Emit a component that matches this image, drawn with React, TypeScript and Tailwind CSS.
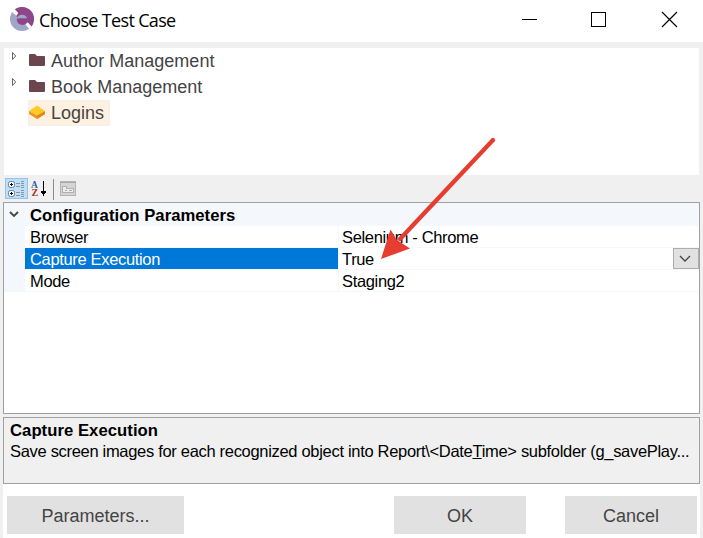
import React from "react";

const arial = "font-['Liberation_Sans',Arial,sans-serif]";

function Logo() {
  return (
    <svg width="26" height="26" viewBox="0 0 26 26" className="block">
      <circle cx="12" cy="13" r="12" fill="#a0a6c8" />
      <path d="M3.5 4.5A12 12 0 0 1 20.5 21.5L15.5 16.5L6.6 11Q6.6 9.2 8 8Z" fill="#8d4788" />
      <path d="M6.9 12.6A5.4 5.4 0 0 1 17.2 12.6Z" fill="#a0a6c8" />
      <path d="M6.9 12.6H18V15.6L16 17.4A5.4 5.4 0 0 1 6.9 12.6Z" fill="#8d4788" />
      <path d="M1.6 5.8L4.6 3L8.2 7L6.2 9.6Z" fill="#fff" />
      <path d="M15.6 18.4L17.6 16.2L21.6 20.6L19.4 23Z" fill="#fff" />
    </svg>
  );
}

function TitleBar() {
  return (
    <header className="flex h-[42px] shrink-0 bg-white pl-[10px]">
      <div className="w-[29px] pt-[6px]"><Logo /></div>
      <h1 className="w-[454px] pt-[5px] font-['Open_Sans','Noto_Sans',sans-serif] text-[18px] leading-[30px] tracking-[-0.66px] text-black">Choose Test Case</h1>
      <svg width="210" height="42" viewBox="493 0 210 42" shapeRendering="crispEdges" fill="none" stroke="#000">
        <path d="M522 19.5H537" />
        <rect x="591.5" y="12.5" width="14" height="14" />
        <path d="M662 12L677 27M677 12L662 27" shapeRendering="auto" strokeWidth="1.15" />
      </svg>
    </header>
  );
}

function Folder() {
  return (
    <svg width="16" height="12" viewBox="0 0 16 12" className="block">
      <path d="M0 1Q0 0 1 0H6L8 2H15Q16 2 16 3V11Q16 12 15 12H1Q0 12 0 11Z" fill="#6b474d" />
    </svg>
  );
}

function TreeRow({ label }: { label: string }) {
  return (
    <li className="flex h-[26px] pl-[7px]">
      <svg width="18" height="16" viewBox="0 0 18 16" className="block">
        <path d="M1.5 4.5V11.5L4.7 8Z" fill="#fff" stroke="#666" />
      </svg>
      <div className="w-[22px] pt-[6px]"><Folder /></div>
      <span className="text-[18px] leading-[26px] tracking-[0.02px]">{label}</span>
    </li>
  );
}

function Tree() {
  return (
    <ul className={`mx-[4px] mt-[6px] h-[127px] shrink-0 bg-white text-[#444] ${arial}`}>
      <TreeRow label="Author Management" />
      <TreeRow label="Book Management" />
      <li className="ml-[24px] flex h-[26px] w-[82px] border border-[#f1eff1] bg-[#fff1e0]">
        <svg width="22" height="24" viewBox="0 0 22 24" className="block shrink-0">
          <path d="M0 10V13L8 18L16 13V10L8 14Z" fill="#ef9722" />
          <path d="M8 14L16 10V13L8 18Z" fill="#df861e" />
          <path d="M0 10L8 4.5L16 10L8 14.5Z" fill="#ffc928" />
        </svg>
        <span className="text-[18px] leading-[24px]">Logins</span>
      </li>
    </ul>
  );
}

function Toolbar() {
  return (
    <div className="flex h-[27px] shrink-0 pl-[5px]">
      <svg width="75" height="27" viewBox="5 175 75 27" shapeRendering="crispEdges" className="block">
        <rect x="5.5" y="178.5" width="22" height="20" fill="#c2def5" stroke="#8fc5f1" />
        {[181, 190].map((y) => (
          <g key={y}>
            <rect x="8.5" y={y + 0.5} width="6" height="6" rx="2" fill="#fff" stroke="#5b83ad" shapeRendering="auto" />
            <path d={`M10 ${y + 3.5}H13M11.5 ${y + 2}V${y + 5}`} stroke="#000" />
            <path d={`M16 ${y + 2.5}H20M16 ${y + 5.5}H20`} stroke="#8297aa" />
            <path d={`M21 ${y + 0.5}H24M21 ${y + 2.5}H24M21 ${y + 4.5}H24M21 ${y + 6.5}H24`} stroke="#8297aa" />
          </g>
        ))}
        <text x="31" y="188" fontSize="9.5" fontWeight="bold" fill="#2e5ca8" fontFamily="Liberation Serif, serif">A</text>
        <text x="31.5" y="196" fontSize="10" fontWeight="bold" fill="#a3332b" fontFamily="Liberation Serif, serif">Z</text>
        <path d="M43.5 181V194" stroke="#000" />
        <path d="M41 191H46V192L43.5 196L41 192Z" fill="#000" />
        <path d="M53.5 179V200" stroke="#8c8c8c" />
        <rect x="60.5" y="181.5" width="15" height="14" fill="#d5d5d5" stroke="#b4b4b4" />
        <path d="M60 182.5H76" stroke="#aaa" />
        <path d="M62.5 192.5V186.5H66L67 188.5H73.5V192.5Z" fill="#eee" stroke="#b0b0b0" />
        <path d="M65 190.5H67M69 190.5H72" stroke="#aaa" />
      </svg>
    </div>
  );
}

type PropertyProps = { name: string; value: string; selected?: boolean };

function Property({ name, value, selected }: PropertyProps) {
  return (
    <div className="flex h-[22px] border-b border-[#f4f7fc] bg-white leading-[23px]">
      <div className={selected ? "w-[313px] bg-[#0078d7] pl-[5px] text-white" : "w-[313px] pl-[5px]"}>{name}</div>
      <div className="flex-1 border-l border-[#f4f7fc] pl-[3px]">{value}</div>
      {selected && (
        <button className="flex h-[21px] w-[26px] items-center justify-center border border-[#adadad] bg-[#e1e1e1] pr-[2px]">
          <svg width="12" height="8" viewBox="0 0 12 8" fill="none" stroke="#444" strokeWidth="1.3">
            <path d="M1 1L6 6L11 1" />
          </svg>
        </button>
      )}
    </div>
  );
}

function PropertyGrid() {
  return (
    <section className={`ml-[3px] h-[212px] w-[697px] shrink-0 border border-[#a0a0a0] bg-white text-[16.5px] text-black ${arial}`}>
      <div className="flex h-[23px] bg-[#f4f7fc]">
        <div className="w-[26px] pt-[8px] pl-[5px]">
          <svg width="10" height="7" viewBox="0 0 10 7" fill="none" stroke="#444" strokeWidth="1.8"><path d="M1 1L5 5L9 1" /></svg>
        </div>
        <h2 className="text-[16.67px] font-bold leading-[25px] tracking-[0.03px]">Configuration Parameters</h2>
      </div>
      <div className="bg-[#f4f7fc] pl-[21px] tracking-[-0.34px]">
        <Property name="Browser" value="Selenium - Chrome" />
        <Property name="Capture Execution" value="True" selected />
        <Property name="Mode" value="Staging2" />
      </div>
    </section>
  );
}

function Description() {
  return (
    <section className={`mt-[3px] ml-[3px] h-[67px] w-[697px] shrink-0 border border-[#a0a0a0] bg-[#f0f0f0] pt-[2px] pl-[6px] text-[16.5px] leading-[21px] text-black ${arial}`}>
      <h2 className="text-[16.67px] font-bold tracking-[0.05px]">Capture Execution</h2>
      <p className="whitespace-nowrap tracking-[-0.31px]">Save screen images for each recognized object into Report\&lt;Date<u>T</u>ime&gt; subfolder (g_savePlay...</p>
    </section>
  );
}

function Footer() {
  const button = "h-[38px] bg-[#e1e1e1] text-[18px] leading-[40px] text-[#444]";
  return (
    <footer className={`ml-[3px] flex w-[697px] flex-1 bg-white pt-[12px] pl-[4px] ${arial}`}>
      <button className={`${button} w-[177px]`}>Parameters...</button>
      <button className={`${button} ml-[210px] w-[132px]`}>OK</button>
      <button className={`${button} ml-[39px] w-[132px]`}>Cancel</button>
    </footer>
  );
}

export default function App() {
  return (
    <main className="relative flex h-[538px] w-[703px] flex-col overflow-hidden bg-[#f0f0f0]">
      <TitleBar />
      <Tree />
      <Toolbar />
      <PropertyGrid />
      <Description />
      <Footer />
      <svg className="pointer-events-none absolute inset-0" width="703" height="538" viewBox="0 0 703 538">
        <path d="M493 140L400 239" stroke="#e63d30" strokeWidth="4.3" strokeLinecap="round" />
        <path d="M381 259L390.5 229.5L397 240L400 242L410 248.5Z" fill="#e63d30" />
      </svg>
    </main>
  );
}
